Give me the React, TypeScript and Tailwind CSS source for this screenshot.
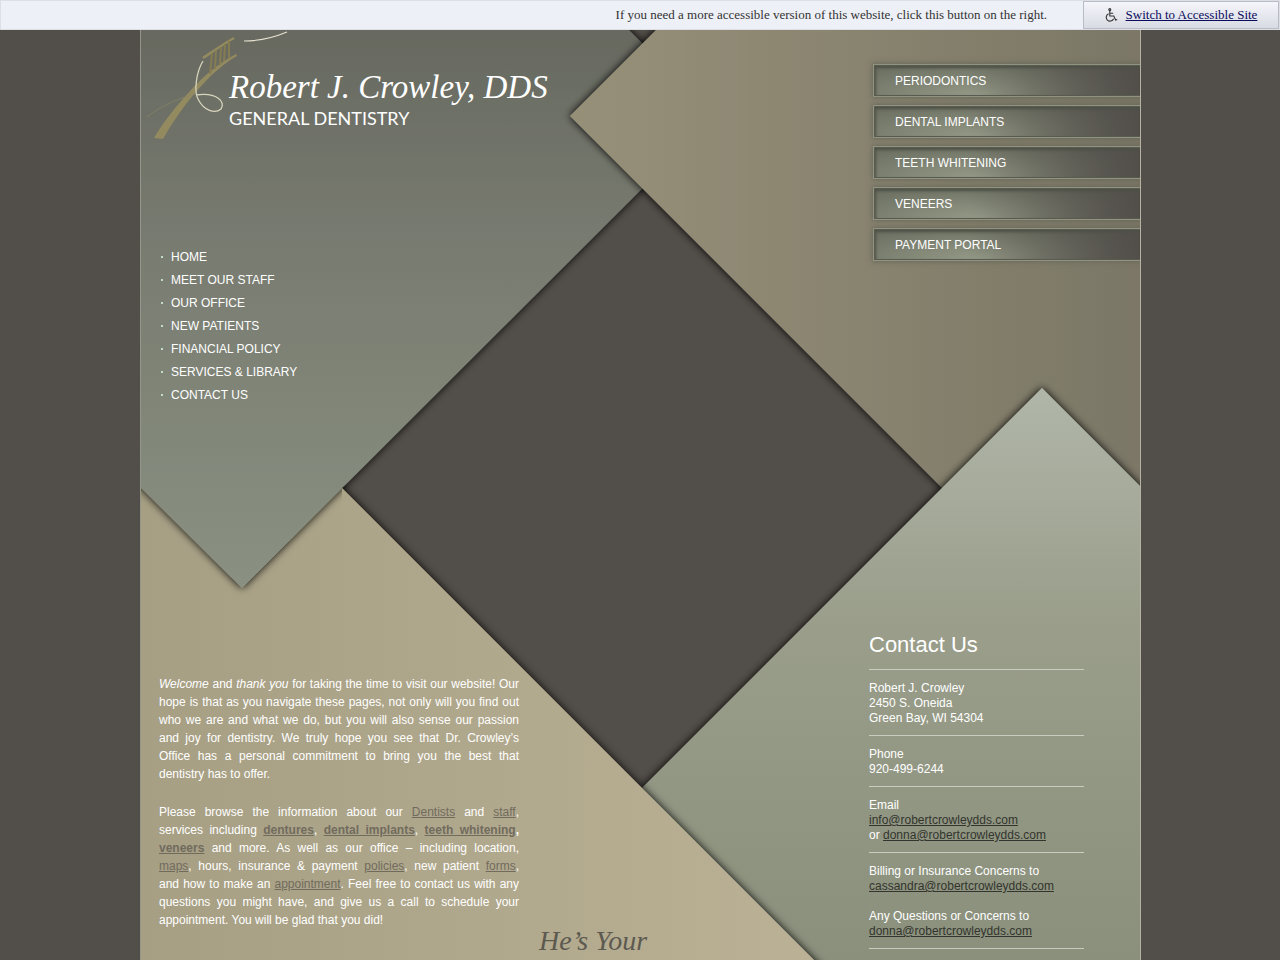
import React from 'react';

const navLinks = [
  'Home',
  'Meet Our Staff',
  'Our Office',
  'New Patients',
  'Financial Policy',
  'Services & Library',
  'Contact Us',
];

const serviceLinks = [
  'Periodontics',
  'Dental Implants',
  'Teeth Whitening',
  'Veneers',
  'Payment Portal',
];

const AccessibilityBar = () => (
  <div className="flex h-[30px] items-stretch justify-end border border-[#dcdfe4] bg-[#edf0f6] font-['Liberation_Serif',serif] text-[13px] text-[#333]">
    <p className="self-center pr-9">
      If you need a more accessible version of this website, click this button on the right.
    </p>
    <a
      href="#accessible"
      className="flex w-[196px] items-center justify-center gap-2 border border-[#b9bbc6] bg-linear-to-b from-[#f5f6fb] to-[#d9dbe4] text-[#0c0c5c]"
    >
      <svg width="13" height="14" viewBox="0 0 13 14" fill="none" stroke="#333" strokeWidth="1.1" aria-hidden="true">
        <circle cx="4.8" cy="1.6" r="1" />
        <path d="M4.8 3v5h4l1.8 4 1.6-.6M5 5.2h3.2" />
        <path d="M3.6 5.8a3.8 3.8 0 1 0 5 4.9" />
      </svg>
      <span className="underline">Switch to Accessible Site</span>
    </a>
  </div>
);

// Four overlapping sheets around the dark square in the middle
const Backdrop = () => (
  <svg
    className="absolute top-0 left-0 h-full w-full"
    viewBox="0 0 1000 930"
    preserveAspectRatio="xMidYMin slice"
    aria-hidden="true"
  >
    <defs>
      <linearGradient id="leaf" gradientUnits="userSpaceOnUse" x1="0" y1="0" x2="0" y2="560">
        <stop offset="0" stopColor="#676960" />
        <stop offset="0.4" stopColor="#797c71" />
        <stop offset="0.75" stopColor="#82887a" />
        <stop offset="1" stopColor="#8a9182" />
      </linearGradient>
      <linearGradient id="clay" gradientUnits="userSpaceOnUse" x1="430" y1="0" x2="1000" y2="0">
        <stop offset="0" stopColor="#979079" />
        <stop offset="1" stopColor="#7b7766" />
      </linearGradient>
      <linearGradient id="sage" gradientUnits="userSpaceOnUse" x1="0" y1="358" x2="0" y2="930">
        <stop offset="0" stopColor="#b0b6a9" />
        <stop offset="0.4" stopColor="#9a9e8b" />
        <stop offset="1" stopColor="#8a907c" />
      </linearGradient>
      <linearGradient id="sand" gradientUnits="userSpaceOnUse" x1="0" y1="0" x2="680" y2="0">
        <stop offset="0" stopColor="#a69f84" />
        <stop offset="0.5" stopColor="#b0a88c" />
        <stop offset="1" stopColor="#bbb196" />
      </linearGradient>
      <filter id="drop" x="-10%" y="-10%" width="120%" height="120%">
        <feDropShadow dx="0" dy="0" stdDeviation="4" floodColor="#000" floodOpacity="1" />
      </filter>
      <clipPath id="fold">
        <path d="M-10 400H260L202 458V600H-10Z" />
      </clipPath>
    </defs>
    <path d="M-20 -20H469L575 86L102 558L-20 437Z" fill="url(#leaf)" filter="url(#drop)" />
    <path d="M536 -20L430 86L802 458L1020 480V-20Z" fill="url(#clay)" filter="url(#drop)" />
    <path d="M902 358L502 758L690 960H1020V476Z" fill="url(#sage)" filter="url(#drop)" />
    <path d="M-20 430H174L704 960H-20Z" fill="url(#sand)" filter="url(#drop)" />
    <g clipPath="url(#fold)">
      <path d="M-20 -20H469L575 86L102 558L-20 437Z" fill="url(#leaf)" filter="url(#drop)" />
    </g>
  </svg>
);

const Logo = () => (
  <header className="relative h-[140px] pt-[36px] pl-[88px] text-white">
    <svg className="absolute top-0 left-0" width="150" height="120" viewBox="0 0 150 120" fill="none" aria-hidden="true">
      <path d="M13 108L22 109C31 93 42 77 54 63C67 48 80 35 96 26L95 24C80 32 64 44 50 60C36 75 23 91 13 108Z" fill="#938a5f" />
      <path d="M62 28C71 22 81 15 93 8" stroke="#938a5f" strokeWidth="2.6" />
      <path d="M71 23L69 44M75 20L74 39M80 17L79 35M84 14L83 31M88 11L88 28" stroke="#867c52" strokeWidth="2" />
      <path d="M55 64C40 67 20 76 6 87" stroke="#8a8567" strokeWidth="0.7" />
      <path d="M62 31C55 42 53 62 57 69C63 81 74 84 80 79C85 72 76 62 55 65" stroke="#d8d5bd" strokeWidth="1.3" />
      <path d="M103 11C118 11 134 7 146 2" stroke="#e4e1cf" strokeWidth="1.2" />
    </svg>
    <h1 className="font-['Liberation_Serif',serif] text-[33px] leading-[42px] whitespace-nowrap italic">
      Robert J. Crowley, DDS
    </h1>
    <p className="font-[Lato,sans-serif] text-[18px] leading-5">GENERAL DENTISTRY</p>
  </header>
);

const TextLink = ({ children, bold = false }: { children: React.ReactNode; bold?: boolean }) => (
  <a href="#page" className={bold ? 'font-bold text-[#716b5e] underline' : 'text-[#716b5e] underline'}>
    {children}
  </a>
);

const MailLink = ({ address }: { address: string }) => (
  <a href={`mailto:${address}`} className="text-[#33342e] underline">
    {address}
  </a>
);

const Welcome = () => (
  <article className="mt-[269px] space-y-5 text-justify leading-[18px]">
    <p>
      <em>Welcome</em> and <em>thank you</em> for taking the time to visit our website! Our hope is
      that as you navigate these pages, not only will you find out who we are and what we do, but
      you will also sense our passion and joy for dentistry. We truly hope you see that Dr.
      Crowley’s Office has a personal commitment to bring you the best that dentistry has to offer.
    </p>
    <p>
      Please browse the information about our <TextLink>Dentists</TextLink> and{' '}
      <TextLink>staff</TextLink>, services including <TextLink bold>dentures</TextLink>,{' '}
      <TextLink bold>dental implants</TextLink>, <TextLink bold>teeth whitening</TextLink>
      <b>,</b> <TextLink bold>veneers</TextLink> and more. As well as our office – including
      location, <TextLink>maps</TextLink>,&nbsp;hours, insurance &amp; payment{' '}
      <TextLink>policies</TextLink>, new patient <TextLink>forms</TextLink>, and&nbsp;how to make an{' '}
      <TextLink>appointment</TextLink>. Feel free to contact us with any questions you might have,
      and give us a call to schedule your appointment. You will be glad that you did!
    </p>
  </article>
);

const Contact = () => (
  <section className="mt-[370px] w-[215px] leading-[15px] *:border-b *:border-[#c9ccc0] *:pb-[9px]">
    <h2 className="text-[22px] leading-[30px]">Contact Us</h2>
    <address className="pt-[11px] not-italic">
      Robert J. Crowley
      <br />
      2450 S. Oneida
      <br />
      Green Bay, WI 54304
    </address>
    <p className="pt-[11px]">
      Phone
      <br />
      920-499-6244
    </p>
    <p className="pt-[11px]">
      Email
      <br />
      <MailLink address="info@robertcrowleydds.com" />
      <br />
      or <MailLink address="donna@robertcrowleydds.com" />
    </p>
    <p className="pt-[11px]">
      Billing or Insurance Concerns to
      <br />
      <MailLink address="cassandra@robertcrowleydds.com" />
      <br />
      <br />
      Any Questions or Concerns to
      <br />
      <MailLink address="donna@robertcrowleydds.com" />
    </p>
  </section>
);

const App = () => {
  return (
    <div className="flex min-h-screen flex-col bg-[#524e49] font-['Liberation_Sans',Arial,sans-serif] text-xs text-white">
      <AccessibilityBar />
      <main className="relative mx-auto w-full max-w-[1000px] grow overflow-hidden shadow-[1px_0_0_#b5b2a4]">
        <Backdrop />
        <div className="relative flex h-full border-l border-[#94968a]">
          <div className="w-[378px] shrink-0">
            <Logo />
            <nav className="mt-[75px] pl-5" aria-label="Main">
              <ul>
                {navLinks.map((link) => (
                  <li key={link} className="flex h-[23px] items-center gap-2">
                    <span className="size-[2px] bg-[#c5dbcf]" />
                    <a href="#page" className="uppercase">
                      {link}
                    </a>
                  </li>
                ))}
              </ul>
            </nav>
            <div className="pl-[18px]">
              <Welcome />
            </div>
          </div>

          <div className="flex grow items-end pb-1 pl-5">
            <p className="font-['Liberation_Serif',serif] text-[28px] leading-[30px] whitespace-nowrap text-[#5c5a50] italic">
              He’s Your
            </p>
          </div>

          <div className="w-[271px] shrink-0 pb-[11px]">
            <nav className="pt-[35px] pl-[5px]" aria-label="Services">
              <ul className="space-y-[10px]">
                {serviceLinks.map((link) => (
                  <li key={link}>
                    <a
                      href="#page"
                      className="flex h-[31px] items-center border border-r-0 border-[#5a5b50] bg-[linear-gradient(90deg,transparent_35%,#524e4a_100%),radial-gradient(ellipse_70%_130%_at_40%_100%,#959a87,#666a5d)] pl-5 uppercase shadow-[inset_1px_2px_3px_#4d5146,0_0_0_1px_#8f937f,0_0_5px_2px_#6b695b]"
                    >
                      {link}
                    </a>
                  </li>
                ))}
              </ul>
            </nav>
            <Contact />
          </div>
        </div>
      </main>
    </div>
  );
};

export default App;
